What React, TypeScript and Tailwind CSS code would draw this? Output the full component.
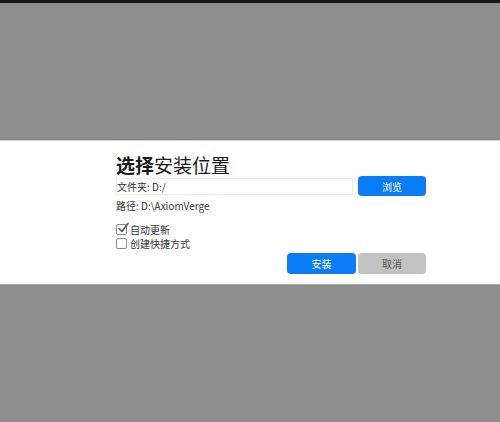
const font = { fontFamily: '"Noto Sans CJK SC", "Noto Sans", sans-serif' }

function Box({ checked }: { checked?: boolean }) {
  return (
    <span className="relative inline-block h-[11px] w-[11px] shrink-0 rounded-[2px] border border-[#8a8a8a] bg-white">
      {checked && (
        <svg viewBox="0 0 12 12" className="absolute -top-[3px] left-[0px] h-[12px] w-[12px]" fill="none">
          <path d="M2 6.5 L5 9.5 L11 1.5" stroke="#555" strokeWidth="1.6" strokeLinecap="round" strokeLinejoin="round" />
        </svg>
      )}
    </span>
  )
}

export default function App() {
  return (
    <div className="flex h-[422px] w-[500px] flex-col bg-[#8f8f8f]" style={font}>
      <div className="h-[3px] bg-[#161616]" />
      <div className="h-[137px] border-b border-[#7d7d7d]" />
      <div className="border-t border-[#d9d9d9] bg-white pb-[10px] pl-[116px] pt-[13px]">
        <div className="flex w-[310px] flex-col">
          <h1 className="text-[19px] leading-[21px] text-[#1a1a1a]">
            <span className="font-semibold">选择</span>安装位置
          </h1>
          <div className="mt-[1px] flex items-center gap-[5px]">
            <div className="flex h-[17px] flex-1 items-center border border-[#ececec] text-[10px] text-[#333]">
              文件夹: D:/
            </div>
            <button className="h-[20px] w-[68px] rounded-[4px] bg-[#0a7cf6] text-[10px] text-white">浏览</button>
          </div>
          <p className="mt-[3px] text-[10px] leading-[14px] text-[#333]">路径: D:\AxiomVerge</p>
          <label className="mt-[9px] flex h-[14px] items-center gap-[3px] text-[10px] text-[#333]">
            <Box checked />
            自动更新
          </label>
          <label className="flex h-[14px] items-center gap-[3px] text-[10px] text-[#333]">
            <Box />
            创建快捷方式
          </label>
          <div className="mt-[3px] flex justify-end gap-[2px]">
            <button className="h-[21px] w-[69px] rounded-[4px] bg-[#0a7cf6] text-[10px] text-white">安装</button>
            <button className="h-[21px] w-[68px] rounded-[4px] bg-[#c2c2c2] text-[10px] text-[#555]">取消</button>
          </div>
        </div>
      </div>
      <div className="flex-1 border-t border-[#a8a8a8]" />
    </div>
  )
}
